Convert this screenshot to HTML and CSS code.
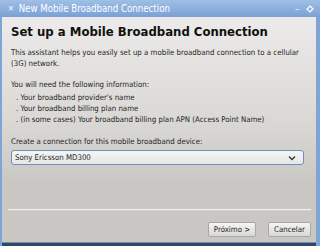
FILE: index.html
```html
<!DOCTYPE html>
<html lang="pt">
<head>
  <meta charset="UTF-8">
  <title>New Mobile Broadband Connection</title>
  <link rel="stylesheet" href="styles.css">
</head>
<body>
  <div class="window">
    <header class="titlebar">
      <span class="close">✕</span>
      <span class="title">New Mobile Broadband Connection</span>
      <span class="controls">
        <span class="min">–</span>
        <svg class="max" width="8" height="8" viewBox="0 0 8 8"><path d="M4 1 L7 4 L4 7 L1 4 Z" fill="none" stroke="#fff" stroke-width="1.2"/></svg>
      </span>
    </header>

    <div class="frame">
      <main class="page">
        <h1>Set up a Mobile Broadband Connection</h1>
        <p>This assistant helps you easily set up a mobile broadband connection to a cellular (3G) network.</p>
        <p class="intro">You will need the following information:</p>
        <ul class="needs">
          <li>. Your broadband provider's name</li>
          <li>. Your broadband billing plan name</li>
          <li>. (in some cases) Your broadband billing plan APN (Access Point Name)</li>
        </ul>
        <p class="label">Create a connection for this mobile broadband device:</p>
        <div class="select">
          <span>Sony Ericsson MD300</span>
          <svg width="8" height="6" viewBox="0 0 8 6"><path d="M1 1.5 L4 4.5 L7 1.5" fill="none" stroke="#333" stroke-width="1.3"/></svg>
        </div>
      </main>

      <footer class="actions">
        <hr>
        <div class="buttons">
          <button>Próximo &gt;</button>
          <button>Cancelar</button>
        </div>
      </footer>
    </div>
  </div>
</body>
</html>
```

FILE: styles.css
```css
body {
  margin: 0;
  font-family: 'DejaVu Sans Condensed', 'DejaVu Sans', sans-serif;
  font-size: 7.8px;
  color: #1e1e1e;
}

.window {
  width: 320px;
  height: 246px;
  display: flex;
  flex-direction: column;
  background: #7fa4d6;
}

.titlebar {
  height: 17px;
  flex-shrink: 0;
  display: flex;
  align-items: center;
  padding: 0 6px 0 8px;
  background: linear-gradient(#a0bfe6, #7aa0d4);
  color: #fff;
  font-size: 9.6px;
}

.close {
  font-size: 7.5px;
  font-weight: bold;
  margin-right: 5px;
}

.controls {
  margin-left: auto;
  display: flex;
  align-items: center;
  gap: 7px;
}

.min {
  font-size: 9px;
}

.frame {
  flex: 1;
  display: flex;
  flex-direction: column;
  margin: 0 4px 3px 2px;
  border-bottom: 1px solid #6c8fbf;
  box-shadow: 0 3px 0 #34465c;
  background: linear-gradient(#ecebe9 0%, #dad9d6 45%, #c8c7c4 75%);
}

.page {
  flex: 1;
  padding: 7px 8px 0 9px;
}

h1 {
  margin: 0 0 8px 0;
  font-size: 13px;
  line-height: 15px;
  font-weight: bold;
  color: #111;
}

p {
  margin: 0 0 10px 0;
  line-height: 11px;
}

.intro {
  margin-bottom: 2px;
}

.needs {
  list-style: none;
  margin: 0 0 11px 0;
  padding: 0 0 0 5px;
  line-height: 11px;
}

.label {
  margin-bottom: 3px;
}

.select {
  height: 13px;
  display: flex;
  align-items: center;
  justify-content: space-between;
  padding: 0 7px 0 3px;
  margin-right: 4px;
  border: 1px solid #6f90c2;
  border-radius: 3px;
  background: linear-gradient(#f6f6f5, #e6e6e4);
}

.actions {
  padding: 0 5px 5px 6px;
}

hr {
  margin: 0 0 11px 0;
  border: 0;
  border-top: 1px solid #f2f2f0;
  border-bottom: 1px solid #d0cfcc;
}

.buttons {
  display: flex;
  justify-content: flex-end;
  gap: 12px;
}

button {
  height: 15px;
  padding: 0 5px;
  font-family: inherit;
  font-size: 7.8px;
  color: #222;
  border: 1px solid #a9a8a5;
  border-radius: 2px;
  background: linear-gradient(#f4f4f3, #d9d8d6);
}
```
